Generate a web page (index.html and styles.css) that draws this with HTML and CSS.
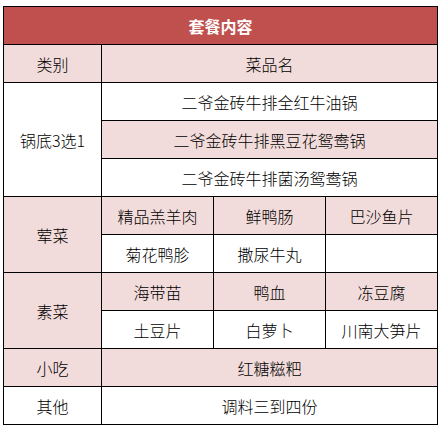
FILE: index.html
```html
<!DOCTYPE html>
<html lang="zh">
<head>
<meta charset="utf-8">
<title>套餐内容</title>
<link rel="stylesheet" href="styles.css">
</head>
<body>
<div class="menu">
  <div class="cell head span4">套餐内容</div>

  <div class="cell pink">类别</div>
  <div class="cell pink span3">菜品名</div>

  <div class="cell white rows3">锅底3选1</div>
  <div class="cell white span3">二爷金砖牛排全红牛油锅</div>
  <div class="cell pink span3">二爷金砖牛排黑豆花鸳鸯锅</div>
  <div class="cell white span3">二爷金砖牛排菌汤鸳鸯锅</div>

  <div class="cell pink rows2">荤菜</div>
  <div class="cell pink">精品羔羊肉</div>
  <div class="cell pink">鲜鸭肠</div>
  <div class="cell pink">巴沙鱼片</div>
  <div class="cell white">菊花鸭胗</div>
  <div class="cell white">撒尿牛丸</div>
  <div class="cell white"></div>

  <div class="cell pink rows2">素菜</div>
  <div class="cell pink">海带苗</div>
  <div class="cell pink">鸭血</div>
  <div class="cell pink">冻豆腐</div>
  <div class="cell white">土豆片</div>
  <div class="cell white">白萝卜</div>
  <div class="cell white">川南大笋片</div>

  <div class="cell pink">小吃</div>
  <div class="cell pink span3">红糖糍粑</div>

  <div class="cell white">其他</div>
  <div class="cell white span3">调料三到四份</div>
</div>
</body>
</html>
```

FILE: styles.css
```css
html, body {
  margin: 0;
  padding: 0;
  background: #ffffff;
}

body {
  padding: 6px 0 0 3px;
  font-family: "Noto Sans CJK SC", "Noto Sans", sans-serif;
  font-size: 16px;
  font-weight: 300;
  color: #000000;
}

.menu {
  display: grid;
  grid-template-columns: 97px 111px 111px 111px;
  grid-auto-rows: 37px;
  gap: 1px;
  width: max-content;
  background: #000000;
  border: 1px solid #000000;
}

.cell {
  display: flex;
  align-items: center;
  justify-content: center;
  white-space: nowrap;
  line-height: 1;
}

.head {
  background: #c0504d;
  color: #ffffff;
  font-weight: bold;
}

.pink {
  background: #f2dcdb;
}

.white {
  background: #ffffff;
}

.span4 {
  grid-column: span 4;
}

.span3 {
  grid-column: span 3;
}

.rows3 {
  grid-row: span 3;
}

.rows2 {
  grid-row: span 2;
}
```
